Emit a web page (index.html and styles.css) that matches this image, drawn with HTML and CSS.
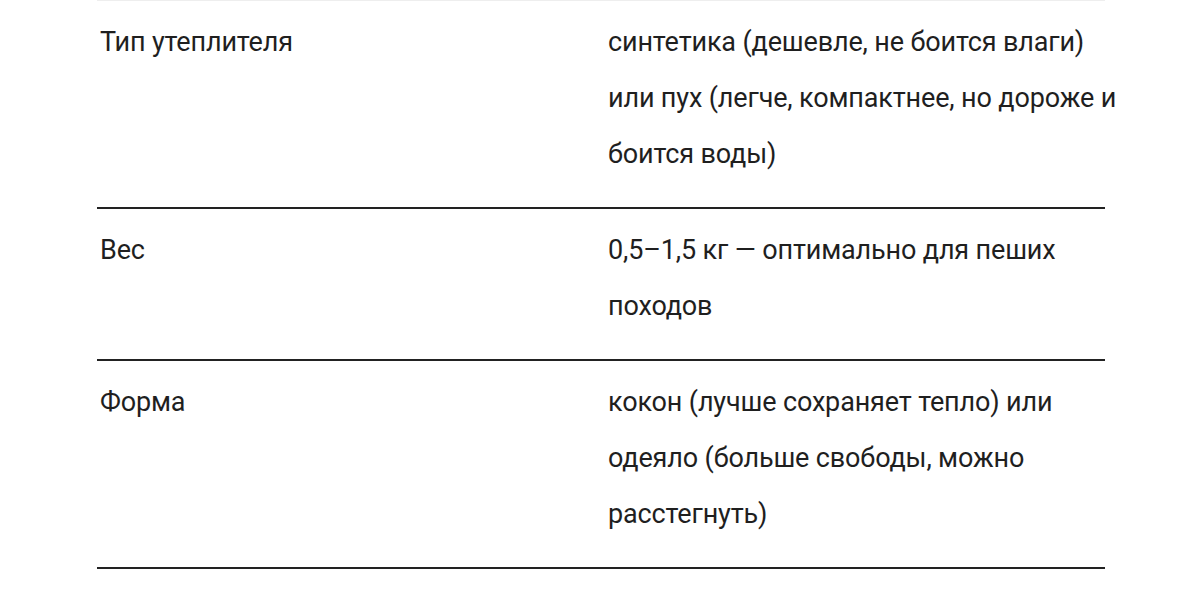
FILE: index.html
```html
<!DOCTYPE html>
<html lang="ru">
<head>
<meta charset="utf-8">
<link rel="stylesheet" href="styles.css">
</head>
<body>
<div class="table">
  <div class="row first">
    <div class="key">Тип утеплителя</div>
    <div class="val">синтетика (дешевле, не боится влаги) или пух (легче, компактнее, но дороже и боится воды)</div>
  </div>
  <div class="row">
    <div class="key">Вес</div>
    <div class="val">0,5–1,5 кг — оптимально для пеших походов</div>
  </div>
  <div class="row">
    <div class="key">Форма</div>
    <div class="val">кокон (лучше сохраняет тепло) или одеяло (больше свободы, можно расстегнуть)</div>
  </div>
  <div class="row last"></div>
</div>
</body>
</html>
```
FILE: styles.css
```css
html, body {
  margin: 0;
  padding: 0;
  background: #ffffff;
}
body {
  font-family: Roboto, "Liberation Sans", sans-serif;
  color: #1f1f1f;
  font-size: 27px;
  line-height: 56px;
  letter-spacing: -0.15px;
}
.table {
  margin-left: 97px;
  width: 1008px;
}
.row {
  display: grid;
  grid-template-columns: 511px 1fr;
  border-top: 2px solid #222222;
  padding: 13px 0 25px;
}
.row.first {
  border-top: 2px solid #eeeeee;
  margin-top: -1px;
}
.row.last {
  padding: 0;
  height: 40px;
}
.key {
  padding-left: 3px;
}
.val {
  margin-right: -16px;
}
```
